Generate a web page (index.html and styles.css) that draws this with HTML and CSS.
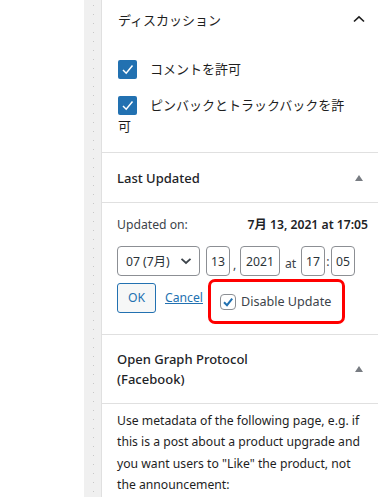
FILE: index.html
```html
<!DOCTYPE html>
<html lang="ja">
<head>
<meta charset="utf-8">
<link rel="stylesheet" href="styles.css">
</head>
<body>
<div class="page">
  <div class="blank"></div>
  <div class="strip"><div class="dots"></div></div>
  <div class="sidebar">
    <section class="panel discussion">
      <div class="panel-head">
        <span class="title-jp">ディスカッション</span>
        <svg class="chev" width="14" height="10" viewBox="0 0 14 10"><path d="M2 7.5 L7 2.8 L12 7.5" fill="none" stroke="#1e1e1e" stroke-width="1.6"/></svg>
      </div>
      <div class="disc-body">
        <label class="cb-row"><span class="cb"><svg width="19" height="19" viewBox="0 0 19 19"><path d="M5 10 L8.2 13.2 L14.5 5.5" fill="none" stroke="#fff" stroke-width="1.5"/></svg></span>コメントを許可</label>
        <label class="cb-row"><span class="cb"><svg width="19" height="19" viewBox="0 0 19 19"><path d="M5 10 L8.2 13.2 L14.5 5.5" fill="none" stroke="#fff" stroke-width="1.5"/></svg></span>ピンバックとトラックバックを許可</label>
      </div>
    </section>

    <section class="panel">
      <div class="box-head">
        <h2 class="box-title">Last Updated</h2>
        <span class="tri"></span>
      </div>
      <div class="box-body lu-body">
        <div class="lu-row">
          <span>Updated on:</span>
          <strong>7月 13, 2021 at 17:05</strong>
        </div>
        <div class="date-row">
          <div class="select">07 (7月)<svg width="12" height="8" viewBox="0 0 12 8"><path d="M1.5 1.8 L6 6 L10.5 1.8" fill="none" stroke="#3c434a" stroke-width="1.8"/></svg></div>
          <span class="inp w24">13</span><span class="sep">,</span>
          <span class="inp w40">2021</span><span class="at">at</span>
          <span class="inp w24">17</span><span class="colon">:</span>
          <span class="inp w24">05</span>
        </div>
        <div class="act-row">
          <span class="ok">OK</span>
          <a class="cancel">Cancel</a>
          <div class="redbox">
            <span class="cb2"><svg width="14" height="14" viewBox="0 0 14 14"><path d="M3 7.2 L6 10.2 L11.2 3.6" fill="none" stroke="#2271b1" stroke-width="2"/></svg></span>
            <span class="dis">Disable Update</span>
          </div>
        </div>
      </div>
    </section>

    <section class="panel">
      <div class="box-head og-head">
        <h2 class="box-title og-title">Open Graph Protocol<br>(Facebook)</h2>
        <span class="tri"></span>
      </div>
      <div class="box-body og-body">
        <p>Use metadata of the following page, e.g. if this is a post about a product upgrade and you want users to "Like" the product, not the announcement:</p>
        <div class="og-input"></div>
      </div>
    </section>
  </div>
</div>
</body>
</html>
```

FILE: styles.css
```css
* { box-sizing: border-box; }
html, body { margin: 0; padding: 0; background: #fff; }
body {
  font-family: "Noto Sans", "Noto Sans CJK JP", sans-serif;
  font-size: 12.2px;
  color: #1e1e1e;
  overflow: hidden;
}
.page { display: flex; height: 497px; overflow: hidden; }
.blank { width: 84px; flex: none; background: #fff; }
.strip { width: 17px; flex: none; background: #f0f0f0; display: flex; justify-content: center; }
.dots {
  width: 1px;
  margin-left: 1px;
  background: repeating-linear-gradient(to bottom, transparent 0 5px, #c8c8c8 5px 6px, transparent 6px 9px);
}
.sidebar { flex: 1; border-left: 1px solid #e0e0e0; display: flex; flex-direction: column; overflow: hidden; }
.panel { border-bottom: 1px solid #e0e0e0; flex: none; }

.discussion { padding: 0 12px 0 16px; }
.panel-head { height: 38px; display: flex; align-items: center; justify-content: space-between; }
.title-jp { font-size: 13px; color: #1e1e1e; }
.disc-body { padding: 21px 14px 15px 0; }
.cb-row { display: block; line-height: 21px; font-size: 13px; color: #1e1e1e; margin-bottom: 15px; }
.cb-row:last-child { margin-bottom: 0; }
.cb {
  display: inline-block; width: 19px; height: 19px; background: #2271b1; border-radius: 2px;
  vertical-align: -5px; margin-right: 13px;
}
.cb svg { display: block; }

.box-head { display: flex; align-items: center; justify-content: space-between; padding: 0 15px 0 15px; height: 50px; border-bottom: 1px solid #e0e0e0; }
.box-title { margin: 0; font-size: 13px; font-weight: 500; color: #1d2327; line-height: 20px; }
.tri { width: 0; height: 0; border-left: 4px solid transparent; border-right: 4px solid transparent; border-bottom: 6px solid #787c82; }
.box-body { padding: 0 10px 0 15px; }
.lu-body { padding-top: 11px; padding-bottom: 10px; }
.lu-row { display: flex; justify-content: space-between; align-items: center; height: 20px; color: #3c434a; }
.lu-row strong { color: #1d2327; font-weight: 600; }
.date-row { display: flex; align-items: center; margin-top: 12px; height: 30px; color: #3c434a; }
.select {
  width: 83px; height: 30px; border: 1px solid #8c8f94; border-radius: 4px;
  display: flex; align-items: center; justify-content: space-between; padding: 0 7px 0 8px;
  color: #2c3338; margin-right: 6px;
}
.inp {
  height: 30px; border: 1px solid #8c8f94; border-radius: 4px;
  display: flex; align-items: center; justify-content: center; color: #2c3338;
}
.w24 { width: 24px; }
.w40 { width: 40px; }
.sep { width: 10px; text-align: left; padding-left: 3px; align-self: flex-end; line-height: 22px; }
.at { width: 21px; text-align: center; padding-top: 4px; }
.colon { width: 6px; text-align: center; }
.act-row { display: flex; align-items: center; margin-top: 3px; }
.ok {
  width: 39px; height: 30px; border: 1px solid #2271b1; border-radius: 3px; background: #f6f7f7;
  color: #2271b1; display: flex; align-items: center; justify-content: center;
  margin-top: -8px;
}
.cancel { color: #2271b1; text-decoration: underline; margin-left: 9px; margin-top: -8px; }
.redbox {
  margin-left: 5px; width: 137px; height: 45px; border: 3px solid #f00; border-radius: 7px;
  display: flex; align-items: center; padding-left: 9px;
}
.cb2 { width: 16px; height: 16px; border: 1px solid #8c8f94; border-radius: 4px; display: flex; align-items: center; justify-content: center; margin-right: 5px; margin-top: 1px; }
.dis { font-size: 12.6px; color: #3c434a; }

.og-head { height: 69px; }
.og-body { padding-top: 6px; }
.og-body p { margin: 0; line-height: 21.3px; color: #1e1e1e; }
.og-input { width: 174px; height: 30px; border: 1px solid #8c8f94; border-radius: 4px; margin-top: 2px; }
```
